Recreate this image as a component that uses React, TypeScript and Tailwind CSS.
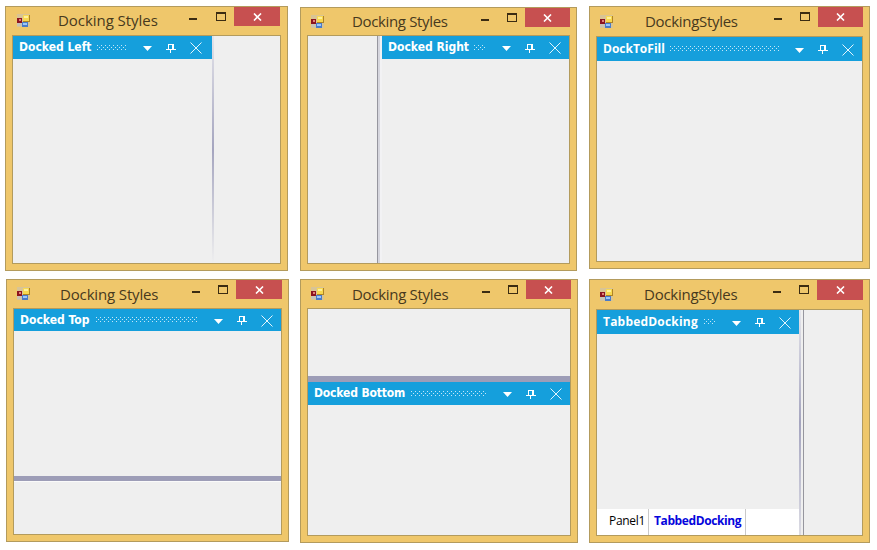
import React from "react";

type FrameProps = {
  title: string;
  frame: string;
  bar: string;
  icon: string;
  titleClass: string;
  controls: string;
  gap: string;
  close: string;
  children: React.ReactNode;
};

function FormIcon({ className }: { className: string }) {
  return (
    <svg className={"shrink-0 " + className} width="14" height="14" viewBox="0 0 14 14" shapeRendering="crispEdges">
      <rect x="0" y="0" width="13" height="13" fill="#d8c495" />
      <rect x="0" y="4" width="5" height="5" fill="#8c1420" />
      <rect x="2" y="5" width="2" height="2" fill="#e08078" />
      <rect x="0" y="9" width="5" height="3" fill="#c9c3b4" />
      <rect x="6" y="1" width="7" height="7" fill="#b08424" />
      <rect x="6" y="1" width="6" height="6" fill="#f8d850" />
      <rect x="7" y="2" width="4" height="2" fill="#fff09a" />
      <rect x="5" y="8" width="6" height="5" fill="#4a7bc8" />
      <rect x="6" y="9" width="4" height="2" fill="#9cc6fa" />
    </svg>
  );
}

function Frame(p: FrameProps) {
  return (
    <section className={"flex flex-col border border-[#b39b5d] bg-[#efc76b] px-[6px] pb-[6px] " + p.frame}>
      <header className={"flex shrink-0 items-start " + p.bar}>
        <FormIcon className={p.icon} />
        <h2 className={"whitespace-nowrap font-['Open_Sans',sans-serif] text-[15px] leading-[20px] text-[#47391d] " + p.titleClass}>{p.title}</h2>
        <div className={"ml-auto flex items-start " + p.controls}>
          <span className="mt-[11px] h-[2px] w-[8px] bg-[#3b2c12]" />
          <span className={"mt-[5px] h-[9px] w-[10px] border border-t-2 border-[#3b2c12] " + p.gap} />
          <span className={"ml-[8px] flex items-center justify-center bg-[#c75050] " + p.close}>
            <svg width="9" height="8" viewBox="0 0 9 8">
              <path d="M1 .5 8 7.5M8 .5 1 7.5" stroke="#fff" strokeWidth="1.6" />
            </svg>
          </span>
        </div>
      </header>
      <div className="flex min-h-0 flex-1 border border-[#b39b5d] bg-[#efefef]">{p.children}</div>
    </section>
  );
}

function Caption({ text, size, font, grip, id }: { text: string; size: string; font: string; grip: string; id: string }) {
  return (
    <div className={"flex shrink-0 items-center bg-[#159fdc] pl-[6px] text-white " + size}>
      <span className={"-mt-px shrink-0 whitespace-nowrap text-[12px] font-bold leading-[16px] " + font}>{text}</span>
      <svg className={"ml-auto h-[6px] shrink-0 " + grip}>
        <defs>
          <pattern id={id} width="4" height="4" patternUnits="userSpaceOnUse">
            <path d="M0 0h1v1H0zM2 2h1v1H2z" fill="#c4e7f8" />
          </pattern>
        </defs>
        <rect width="100%" height="100%" fill={"url(#" + id + ")"} />
      </svg>
      <svg className="ml-[16px] mt-[2px] shrink-0" width="9" height="5" viewBox="0 0 9 5"><path d="M0 0h9L4.5 5z" fill="#fff" /></svg>
      <svg className="ml-[14px] shrink-0" width="10" height="10" viewBox="0 0 10 10" shapeRendering="crispEdges">
        <path d="M2 1h6v1H2zM2 2h1v4H2zM6 2h2v4H6zM0 6h10v1H0zM4 7h1v3H4z" fill="#fff" />
      </svg>
      <svg className="ml-[14px] mt-px shrink-0" width="12" height="12" viewBox="0 0 12 12"><path d="M.5.5l11 11M11.5.5l-11 11" stroke="#e4f4fc" /></svg>
    </div>
  );
}

const tahoma = "font-['DejaVu_Sans_Condensed','DejaVu_Sans',sans-serif]";
const segoe = "font-['Open_Sans',sans-serif]";

export default function App() {
  return (
    <main className="flex h-[550px] w-[877px] overflow-hidden bg-white">
      <div className="flex flex-col pl-[5px] pt-[6px]">
        <Frame title="Docking Styles" frame="h-[265px] w-[283px]" bar="h-[28px]" icon="mt-[7px] ml-[5px]" titleClass="ml-[27px] mt-[3px] tracking-[-0.05px]" controls="mr-px" gap="ml-[19px]" close="h-[19px] w-[46px]">
          <div className="w-[199px]">
            <Caption id="g1" text="Docked Left" size="h-[23px] pr-[10px]" font={tahoma} grip="w-[30px]" />
          </div>
          <div className="w-[2px] bg-linear-to-b from-[#e4e4ea] via-[#a5a5bf] to-[#efefef]" />
        </Frame>
        <Frame title="Docking Styles" frame="ml-px mt-[8px] h-[263px] w-[283px]" bar="h-[28px]" icon="mt-[7px] ml-[4px]" titleClass="ml-[29px] mt-[4px] tracking-[-0.15px]" controls="" gap="ml-[18px]" close="h-[19px] w-[46px]">
          <div className="flex flex-1 flex-col">
            <Caption id="g4" text="Docked Top" size="h-[22px] pr-[8px]" font={tahoma} grip="w-[102px]" />
            <div className="flex-1" />
            <div className="h-[5px] bg-[#9d9db7]" />
            <div className="h-[53px] border-t border-white/70" />
          </div>
        </Frame>
      </div>
      <div className="flex flex-col pl-[11px] pt-[7px]">
        <Frame title="Docking Styles" frame="h-[264px] w-[277px]" bar="h-[27px]" icon="mt-[7px] ml-[4px]" titleClass="ml-[27px] mt-[3px] tracking-[-0.35px]" controls="" gap="ml-[18px]" close="h-[19px] w-[45px]">
          <div className="w-[70px] border-r border-[#96969e]" />
          <div className="w-[4px] border-l-2 border-[#d6d6de] bg-[#f2f2f4]" />
          <div className="flex-1">
            <Caption id="g2" text="Docked Right" size="h-[23px] pr-[8px]" font={tahoma} grip="w-[12px]" />
          </div>
        </Frame>
        <Frame title="Docking Styles" frame="mt-[8px] h-[264px] w-[278px]" bar="h-[28px]" icon="mt-[7px] ml-[4px]" titleClass="ml-[27px] mt-[4px] tracking-[-0.3px]" controls="" gap="ml-[18px]" close="h-[19px] w-[45px]">
          <div className="flex flex-1 flex-col">
            <div className="h-[67px]" />
            <div className="h-[6px] bg-[#9d9db7]" />
            <Caption id="g5" text="Docked Bottom" size="h-[23px] pr-[8px]" font={tahoma + " tracking-[-0.15px]"} grip="w-[76px]" />
          </div>
        </Frame>
      </div>
      <div className="flex flex-col pl-[11px] pt-[6px]">
        <Frame title="DockingStyles" frame="h-[263px] w-[281px]" bar="h-[29px]" icon="mt-[8px] ml-[4px]" titleClass="ml-[31px] mt-[4px] tracking-[-0.3px]" controls="" gap="ml-[18px]" close="h-[20px] w-[45px]">
          <div className="flex-1">
            <Caption id="g3" text="DockToFill" size="h-[24px] pr-[8px]" font={segoe} grip="w-[109px]" />
          </div>
        </Frame>
        <Frame title="DockingStyles" frame="mt-[10px] h-[264px] w-[281px]" bar="h-[29px]" icon="mt-[8px] ml-[4px]" titleClass="ml-[30px] mt-[4px] tracking-[-0.25px]" controls="" gap="ml-[18px]" close="h-[20px] w-[46px]">
          <div className="flex w-[202px] flex-col">
            <Caption id="g6" text="TabbedDocking" size="h-[24px] pr-[8px]" font={segoe + " tracking-[0.2px]"} grip="w-[12px]" />
            <div className="flex-1" />
            <div className={"flex h-[26px] bg-white text-[12px] leading-[24px] " + segoe}>
              <span className="w-[52px] border-r border-[#c9c9c9] pl-[12px] tracking-[-0.3px] text-black">Panel1</span>
              <span className="w-[97px] border-r border-[#c9c9c9] pl-[5px] font-bold tracking-[-0.4px] text-[#0505dc]">TabbedDocking</span>
            </div>
          </div>
          <div className="w-[2px] bg-linear-to-b from-[#e4e4ea] via-[#a5a5bf] to-[#dcdce4]" />
          <div className="w-[3px] border-r border-[#96969e]" />
        </Frame>
      </div>
    </main>
  );
}
